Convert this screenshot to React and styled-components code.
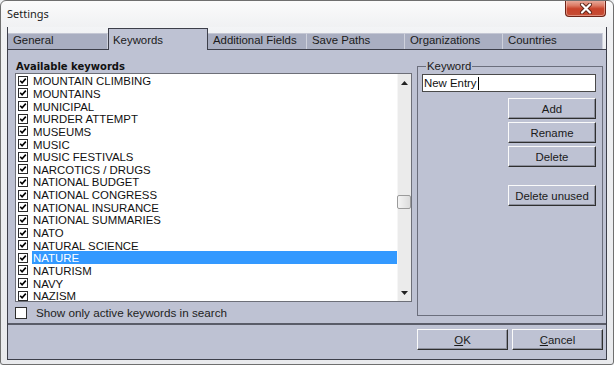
import React from 'react';
import styled, { createGlobalStyle } from 'styled-components';

const Global = createGlobalStyle`
  html, body { margin: 0; padding: 0; background: #eef0f2; }
  body { font-family: "Liberation Sans", Arial, sans-serif; }
  * { box-sizing: border-box; }
`;

const PANEL = '#bec2d3';
const TAB = '#a9aec1';
const DARK = '#3d3f4a';
const UI_FONT = '"Liberation Sans", Arial, sans-serif';

const Window = styled.div`
  width: 614px;
  height: 365px;
  border: 1px solid #6f6f6f;
  border-radius: 6px 6px 3px 3px;
  background: linear-gradient(#fbfbfb, #f0f1f3 26px, #e9eaed);
  display: flex;
  flex-direction: column;
  overflow: hidden;
`;

const TitleBar = styled.div`
  height: 26px;
  flex: none;
  display: flex;
  justify-content: space-between;
  align-items: flex-start;
  padding: 0 7px 0 6px;
`;

const Title = styled.div`
  font-family: "Noto Sans", sans-serif;
  font-size: 11px;
  color: #1c1c1c;
  line-height: 26px;
`;

const CloseButton = styled.div`
  width: 41px;
  height: 17px;
  margin-top: -1px;
  border: 1px solid #6e2417;
  border-top: none;
  border-radius: 0 0 4px 4px;
  background: linear-gradient(#eab2a4 0%, #dc7a64 35%, #c8432b 55%, #c54e35 100%);
  box-shadow: inset 0 0 0 1px rgba(255, 220, 210, 0.45);
  display: flex;
  align-items: center;
  justify-content: center;
`;

const Client = styled.div`
  flex: 1;
  margin: 0 6px 4px 6px;
  border: 1px solid ${DARK};
  border-top: none;
  display: flex;
  flex-direction: column;
`;

const TabStrip = styled.div`
  height: 22px;
  flex: none;
  display: flex;
  align-items: flex-end;
  background: linear-gradient(#f3f4f6, #eceef1);
`;

const Tab = styled.div`
  width: ${(p) => p.$w}px;
  flex: none;
  font-family: ${UI_FONT};
  font-size: 11.4px;
  line-height: 14px;
  color: #1a1a1a;
  padding-left: ${(p) => (p.$active ? 4 : 5)}px;
  white-space: nowrap;
  ${(p) =>
    p.$active
      ? `
    height: 22px;
    margin-bottom: -1px;
    position: relative;
    z-index: 1;
    background: ${PANEL};
    border: 1px solid ${DARK};
    border-bottom: none;
    padding-top: 4px;
  `
      : `
    height: 16px;
    background: ${TAB};
    border-top: 1px solid #c4c7d4;
    border-right: 1px solid #cfd2dd;
    padding-top: 0;
    line-height: 13px;
  `}
`;

const Panel = styled.div`
  flex: 1;
  background: ${PANEL};
  border-top: 1px solid ${DARK};
  border-bottom: 2px solid #5a5c68;
  display: grid;
  grid-template-columns: 397px 186px;
  column-gap: 5px;
  padding: 10px 3px 0 7px;
`;

const LeftColumn = styled.div`
  display: flex;
  flex-direction: column;
`;

const SectionLabel = styled.div`
  font-family: "DejaVu Sans", sans-serif;
  font-weight: bold;
  font-size: 10px;
  line-height: 13px;
  color: #111;
  padding-left: 1px;
`;

const ListBox = styled.div`
  height: 229px;
  border: 1px solid #6d6f78;
  background: #fff;
  display: flex;
`;

const Items = styled.div`
  flex: 1;
  display: flex;
  flex-direction: column;
  padding-top: 0.5px;
`;

const Item = styled.div`
  height: 12.65px;
  display: flex;
  align-items: center;
  font-family: ${UI_FONT};
  font-size: 11.4px;
  color: #111;
`;

const ItemCheck = styled.svg`
  flex: none;
  margin: 0 4px 0 2px;
`;

const ItemLabel = styled.span`
  flex: 1;
  height: 100%;
  display: flex;
  align-items: center;
  padding-left: 1px;
  padding-top: 1px;
  white-space: nowrap;
  background: ${(p) => (p.$selected ? '#3399ff' : 'transparent')};
  color: ${(p) => (p.$selected ? '#fff' : '#111')};
`;

const ScrollBar = styled.div`
  width: 14px;
  flex: none;
  background: #ebebeb;
  border-left: 1px solid #f6f6f6;
  display: flex;
  flex-direction: column;
`;

const ArrowButton = styled.div`
  height: 17px;
  flex: none;
  display: flex;
  align-items: center;
  justify-content: center;
`;

const Track = styled.div`
  flex: 1;
  display: flex;
  flex-direction: column;
`;

const Thumb = styled.div`
  height: 14px;
  margin: 0 0 0 -1px;
  border: 1px solid #9b9b9b;
  border-radius: 2px;
  background: linear-gradient(90deg, #f4f4f4, #dcdcdc);
`;

const CheckRow = styled.label`
  height: 21px;
  display: flex;
  align-items: center;
  gap: 9px;
  font-family: ${UI_FONT};
  font-size: 11.7px;
  color: #222;
`;

const BigBox = styled.span`
  width: 12px;
  height: 12px;
  background: #fff;
  border: 1px solid #2e2e2e;
`;

const RightColumn = styled.div`
  display: flex;
  flex-direction: column;
  padding-bottom: 7px;
`;

const Group = styled.fieldset`
  flex: 1;
  margin: 0;
  border: 1px solid #6b6e7c;
  padding: 1px 6px 0 4px;
  display: flex;
  flex-direction: column;
  align-items: flex-end;
`;

const Legend = styled.legend`
  font-family: ${UI_FONT};
  font-size: 11.4px;
  line-height: 13px;
  color: #1a1a1a;
  padding: 0 1px;
  margin-left: 4px;
`;

const TextInput = styled.div`
  width: 100%;
  height: 18px;
  background: #fff;
  border: 1px solid #4a4a4a;
  font-family: ${UI_FONT};
  font-size: 11.4px;
  line-height: 16px;
  color: #111;
  padding-left: 1px;
  display: flex;
  align-items: center;
`;

const Caret = styled.span`
  width: 1px;
  height: 13px;
  background: #000;
  margin-left: 1px;
`;

const Button = styled.div`
  width: ${(p) => p.$w || 88}px;
  height: 21px;
  margin-top: ${(p) => p.$mt || 0}px;
  background: ${PANEL};
  border-top: 1px solid #fafafa;
  border-left: 1px solid #fafafa;
  border-right: 1px solid #2f2f2f;
  border-bottom: 1px solid #2f2f2f;
  box-shadow: inset -1px -1px 0 #8c8f9c;
  font-family: ${UI_FONT};
  font-size: 11.4px;
  color: #1a1a1a;
  display: flex;
  align-items: center;
  justify-content: center;
  flex: none;
`;

const ButtonBar = styled.div`
  height: 34px;
  flex: none;
  background: ${PANEL};
  display: flex;
  justify-content: flex-end;
  align-items: flex-start;
  gap: 4px;
  padding: 4px 3px 0 0;
`;

const U = styled.span`
  text-decoration: underline;
`;

const CheckGlyph = () => (
  <ItemCheck width="10" height="10" viewBox="0 0 10 10">
    <rect x="0.5" y="0.5" width="9" height="9" fill="#fff" stroke="#2a2a2a" />
    <path d="M2.2 4.8 L4.1 6.8 L7.8 2.6" fill="none" stroke="#000" strokeWidth="1.6" />
  </ItemCheck>
);

const keywords = [
  'MOUNTAIN CLIMBING',
  'MOUNTAINS',
  'MUNICIPAL',
  'MURDER ATTEMPT',
  'MUSEUMS',
  'MUSIC',
  'MUSIC FESTIVALS',
  'NARCOTICS / DRUGS',
  'NATIONAL BUDGET',
  'NATIONAL CONGRESS',
  'NATIONAL INSURANCE',
  'NATIONAL SUMMARIES',
  'NATO',
  'NATURAL SCIENCE',
  'NATURE',
  'NATURISM',
  'NAVY',
  'NAZISM',
];

const tabs = [
  ['General', 100],
  ['Keywords', 100],
  ['Additional Fields', 99],
  ['Save Paths', 98],
  ['Organizations', 98],
  ['Countries', 100],
];

export default function App() {
  return (
    <>
      <Global />
      <Window>
        <TitleBar>
          <Title>Settings</Title>
          <CloseButton>
            <svg width="14" height="11" viewBox="0 0 14 11">
              <path d="M3 1.5 L11 9.5 M11 1.5 L3 9.5" stroke="#5b2418" strokeWidth="4" strokeLinecap="round" />
              <path d="M3 1.5 L11 9.5 M11 1.5 L3 9.5" stroke="#ffffff" strokeWidth="2.2" strokeLinecap="round" />
            </svg>
          </CloseButton>
        </TitleBar>
        <Client>
          <TabStrip>
            {tabs.map(([t, w]) => (
              <Tab key={t} $w={w} $active={t === 'Keywords'}>
                {t}
              </Tab>
            ))}
          </TabStrip>
          <Panel>
            <LeftColumn>
              <SectionLabel>Available keywords</SectionLabel>
              <ListBox>
                <Items>
                  {keywords.map((k) => (
                    <Item key={k}>
                      <CheckGlyph />
                      <ItemLabel $selected={k === 'NATURE'}>{k}</ItemLabel>
                    </Item>
                  ))}
                </Items>
                <ScrollBar>
                  <ArrowButton>
                    <svg width="7" height="4" viewBox="0 0 7 4">
                      <path d="M0 4 L3.5 0 L7 4 Z" fill="#222" />
                    </svg>
                  </ArrowButton>
                  <Track>
                    <Thumb style={{ marginTop: 104 }} />
                  </Track>
                  <ArrowButton>
                    <svg width="7" height="4" viewBox="0 0 7 4">
                      <path d="M0 0 L7 0 L3.5 4 Z" fill="#222" />
                    </svg>
                  </ArrowButton>
                </ScrollBar>
              </ListBox>
              <CheckRow>
                <BigBox />
                Show only active keywords in search
              </CheckRow>
            </LeftColumn>
            <RightColumn>
              <Group>
                <Legend>Keyword</Legend>
                <TextInput>
                  New Entry
                  <Caret />
                </TextInput>
                <Button $mt={6}>Add</Button>
                <Button $mt={3}>Rename</Button>
                <Button $mt={3}>Delete</Button>
                <Button $mt={18}>Delete unused</Button>
              </Group>
            </RightColumn>
          </Panel>
          <ButtonBar>
            <Button $w={91}>
              <span>
                <U>O</U>K
              </span>
            </Button>
            <Button $w={91}>
              <span>
                <U>C</U>ancel
              </span>
            </Button>
          </ButtonBar>
        </Client>
      </Window>
    </>
  );
}
